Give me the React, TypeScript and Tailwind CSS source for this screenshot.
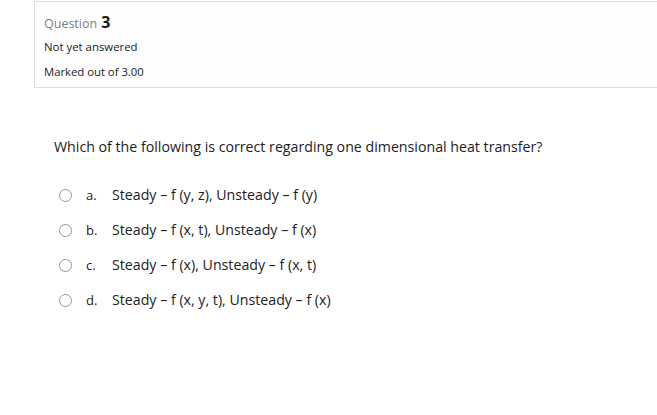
const options = [
  { letter: 'a.', text: 'Steady – f (y, z), Unsteady – f (y)' },
  { letter: 'b.', text: 'Steady – f (x, t), Unsteady – f (x)' },
  { letter: 'c.', text: 'Steady – f (x), Unsteady – f (x, t)' },
  { letter: 'd.', text: 'Steady – f (x, y, t), Unsteady – f (x)' },
];

export default function App() {
  return (
    <div className="h-[415px] w-[657px] overflow-hidden bg-white text-[#1d2125]" style={{ fontFamily: '"Open Sans", "Noto Sans", sans-serif' }}>
      {/* question info box */}
      <div className="ml-[34px] mt-px h-[87px] border border-r-0 border-[#dedede] bg-[#fdfdfd] pl-[9px] pt-[12px]">
        <div className="flex items-baseline gap-[4px] leading-none">
          <span className="text-[12.5px] text-[#7b8186]">Question</span>
          <span className="text-[16px] font-bold text-[#1a1a1a]">3</span>
        </div>
        <div className="mt-[10px] text-[11.4px] leading-none text-[#222]">Not yet answered</div>
        <div className="mt-[14px] text-[11.3px] leading-none text-[#222]">Marked out of 3.00</div>
      </div>

      <div className="ml-[54px] mt-[52px] text-[14.2px] leading-none text-[#1d2125]">
        Which of the following is correct regarding one dimensional heat transfer?
      </div>

      <div className="mt-[34px] flex flex-col gap-[21px]">
        {options.map((o) => (
          <div key={o.letter} className="ml-[59px] flex items-center text-[14.2px] leading-[14px] text-[#1d2125]">
            <span className="h-[13px] w-[13px] shrink-0 rounded-full border border-[#929599] bg-white" />
            <span className="ml-[14px] w-[26px] text-[13px]">{o.letter}</span>
            <span>{o.text}</span>
          </div>
        ))}
      </div>
    </div>
  );
}
